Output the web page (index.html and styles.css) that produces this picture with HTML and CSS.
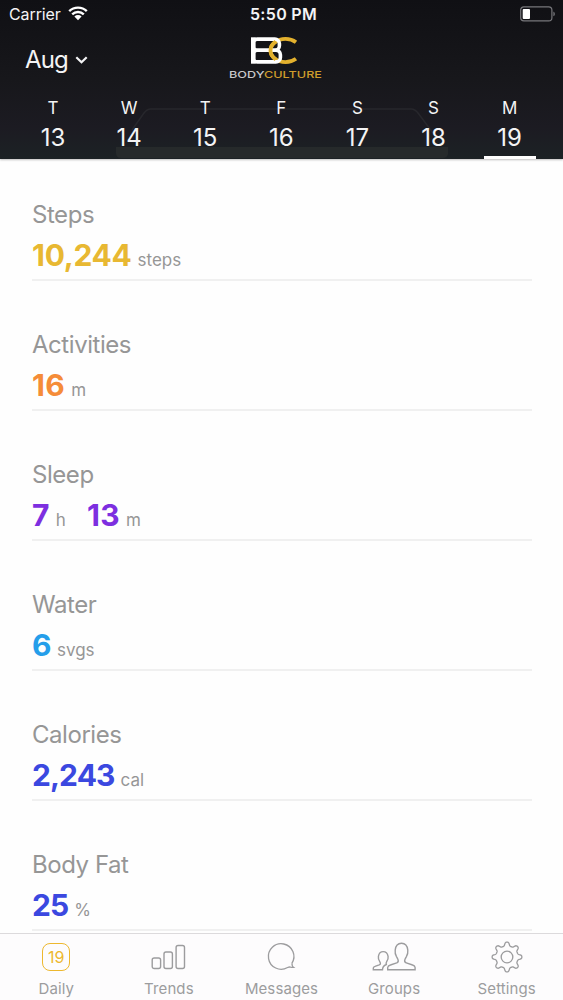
FILE: index.html
```
<!DOCTYPE html>
<html lang="en">

<head>
  <meta charset="UTF-8">
  <meta name="viewport" content="width=device-width, initial-scale=1.0">
  <title>Body Culture</title>

  <link rel="stylesheet" href="styles.css">
</head>

<body>
  <div class="screen">

    <!-- Header: status bar, month picker, logo and days -->
    <header class="header">
      <!-- Faint outline behind the days -->
      <svg class="header-art" width="563" height="159" viewBox="0 0 563 159">
        <path d="M116 147h332v7q-1 4-5 4H121q-5 0-5-5z" fill="#262a2b"/>
        <path d="M132 130l12-17q3-4 7-4h260q4 0 7 4l15 20" fill="none" stroke="#27272c" stroke-width="1.5"/>
      </svg>

      <div class="status-bar">
        <div class="status-left">
          <span class="carrier">Carrier</span>
          <svg class="wifi" width="20" height="15" viewBox="0 0 20 15">
            <path d="M1.2 5.2a12.6 12.6 0 0 1 17.6 0M4.2 8.3a8.4 8.4 0 0 1 11.6 0" fill="none" stroke="#fff" stroke-width="2.4"/>
            <path d="M6.4 10.5a5.2 5.2 0 0 1 7.2 0L10 14.2z" fill="#fff"/>
          </svg>
        </div>
        <span class="time">5:50 PM</span>
        <div class="status-right">
          <svg width="36" height="16" viewBox="0 0 36 16">
            <rect x=".7" y=".9" width="31.2" height="14" rx="3.2" fill="none" stroke="#77777b" stroke-width="1.2"/>
            <rect x="2.7" y="3" width="7.3" height="10" rx="1" fill="#fff"/>
            <path d="M33.4 5.5q1.5.8 1.5 2.4t-1.5 2.4z" fill="#77777b"/>
          </svg>
        </div>
      </div>

      <div class="title-row">
        <div class="month">
          <span>Aug</span>
          <svg width="13" height="11" viewBox="0 0 13 11">
            <path d="M1.3 3.2l5.200 5 5.200-5" fill="none" stroke="#f4f4f5" stroke-width="2.2"/>
          </svg>
        </div>
        <div class="logo">
          <svg width="50" height="27" viewBox="0 0 50 27">
            <!-- Gold ring, open on the right -->
            <ellipse cx="34.500" cy="13.500" rx="15" ry="11.600" pathLength="360" stroke-dasharray="276 84" stroke-dashoffset="-42" fill="none" stroke="#e3b12e" stroke-width="3.800"/>
            <!-- White boxes -->
            <rect x="1.900" y="2.100" width="26.500" height="11.200" rx="4.500" fill="none" stroke="#fff" stroke-width="3.600"/>
            <rect x="1.900" y="13.300" width="27.500" height="11.600" rx="4.500" fill="none" stroke="#fff" stroke-width="3.600"/>
            <rect x="0" y=".3" width="4.600" height="26.400" fill="#fff"/>
            <!-- Left side of the ring passes over the boxes -->
            <ellipse cx="34.500" cy="13.500" rx="15" ry="11.600" pathLength="360" stroke-dasharray="92 268" stroke-dashoffset="-134" fill="none" stroke="#e3b12e" stroke-width="3.800"/>
          </svg>
          <svg width="94" height="10" viewBox="0 0 94 10">
            <text class="logo-name" x="0" y="8.300" textLength="93" lengthAdjust="spacingAndGlyphs">BODY<tspan class="gold">CULTURE</tspan></text>
          </svg>
        </div>
      </div>

      <div class="days">
        <div class="day"><span class="weekday">T</span><span class="date">13</span></div>
        <div class="day"><span class="weekday">W</span><span class="date">14</span></div>
        <div class="day"><span class="weekday">T</span><span class="date">15</span></div>
        <div class="day"><span class="weekday">F</span><span class="date">16</span></div>
        <div class="day"><span class="weekday">S</span><span class="date">17</span></div>
        <div class="day"><span class="weekday">S</span><span class="date">18</span></div>
        <div class="day selected"><span class="weekday">M</span><span class="date">19</span></div>
      </div>
    </header>

    <!-- Daily values -->
    <main class="metrics">
      <section class="metric steps">
        <h2>Steps</h2>
        <p><b>10,244</b><span>steps</span></p>
      </section>
      <section class="metric activities">
        <h2>Activities</h2>
        <p><b>16</b><span>m</span></p>
      </section>
      <section class="metric sleep">
        <h2>Sleep</h2>
        <p><b>7</b><span class="hours">h</span><b>13</b><span>m</span></p>
      </section>
      <section class="metric water">
        <h2>Water</h2>
        <p><b>6</b><span>svgs</span></p>
      </section>
      <section class="metric calories">
        <h2>Calories</h2>
        <p><b>2,243</b><span>cal</span></p>
      </section>
      <section class="metric fat">
        <h2>Body Fat</h2>
        <p><b>25</b><span>%</span></p>
      </section>
    </main>

    <!-- Bottom tab bar -->
    <nav class="tabs">
      <a class="tab">
        <span class="icon"><span class="calendar">19</span></span>
        <span>Daily</span>
      </a>
      <a class="tab">
        <svg class="icon" width="36" height="32" viewBox="0 0 36 32">
          <rect x="1.200" y="17" width="8.400" height="10.500" rx="2"/>
          <rect x="13" y="11" width="8.400" height="16.500" rx="2"/>
          <rect x="25.100" y="4.500" width="8.400" height="23" rx="2"/>
        </svg>
        <span>Trends</span>
      </a>
      <a class="tab">
        <svg class="icon" width="30" height="32" viewBox="0 0 32 32">
          <path d="M27.600 22.800A13.600 13.600 0 1 0 23 27.200q2-.8 3.200-.4 1.300.4 3.100.3-1.500-1-1.700-4.300"/>
        </svg>
        <span>Messages</span>
      </a>
      <a class="tab">
        <svg class="icon" width="44" height="32" viewBox="0 0 44 32">
          <path d="M15.700 28.700v-2.200q.2-1.800 2.700-2.500l6.300-2.200q2.100-.8 1.400-2.900-.5-1.500-1.600-3.300-1.800-3.100-1.300-6.500.7-6.900 6.300-6.900t6.300 6.900q.4 3.400-1.400 6.500-1.100 1.800-1.600 3.300-.7 2.100 1.500 2.900l6.300 2.200q2.400.7 2.500 2.500v2.200z"/>
          <path d="M10.500 28.700H1.300v-1.600q0-1.300 1.700-1.800l4.200-1.400q1.800-.7.900-2.600-2.300-3.300-1.700-6 .8-4.700 4.800-4.700t4.900 4.700q.4 2.400-1.300 5-1.100 1.700-.5 3.200-3.700 1.600-3.800 5.200z"/>
        </svg>
        <span>Groups</span>
      </a>
      <a class="tab">
        <svg class="icon" width="34" height="34" viewBox="0 0 34 34">
          <circle cx="17" cy="17" r="6.200"/>
          <path id="gear" d=""/>
        </svg>
        <span>Settings</span>
      </a>
    </nav>
  </div>

  <script src="gear.js"></script>
</body>

</html>
```
FILE: styles.css
```
body {
  margin: 0;
  padding: 0;
  font-family: Inter, "Liberation Sans", sans-serif;
}

.screen {
  display: flex;
  flex-direction: column;
  height: 1000px;
  overflow: hidden;
  background-color: #fefefe;
}

/* Header */
.header {
  position: relative;
  height: 159px;
  flex: none;
  background: linear-gradient(#101014, #17171b 50%, #1c1b22 80%, #1c2225);
  color: #f4f4f5;
  box-shadow: 0 1px 2px rgba(0, 0, 0, 0.25);
}

/* Decoration that lies under the days */
.header-art {
  position: absolute;
  left: 0;
  top: 0;
}

.status-bar,
.title-row,
.days {
  position: relative;
  display: grid;
}

.status-bar {
  grid-template-columns: 1fr auto 1fr;
  align-items: center;
  height: 28px;
  padding: 0 7px 0 9px;
  font-size: 16px;
}

.status-left {
  display: flex;
  align-items: center;
  gap: 7px;
}

.carrier {
  letter-spacing: -0.1px;
}

.wifi {
  margin-top: -2px;
}

.time {
  margin-left: 2px;
  font-weight: 600;
  letter-spacing: 0.3px;
}

.status-right {
  display: flex;
  justify-content: flex-end;
}

.title-row {
  grid-template-columns: 229px 94px;
  height: 64px;
}

.month {
  display: flex;
  align-items: center;
  gap: 7px;
  height: 63px;
  padding-left: 25px;
  font-size: 24px;
  letter-spacing: -0.9px;
}

.logo {
  display: flex;
  flex-direction: column;
  align-items: center;
  gap: 6px;
  padding-top: 9px;
}

.logo-name {
  font-family: Inter, sans-serif;
  font-size: 9.5px;
  font-weight: 500;
  fill: #c9c9cb;
}

.gold {
  fill: #cf9c2b;
}

.days {
  grid-template-columns: repeat(7, 76.1px);
  height: 67px;
  padding-left: 15px;
}

.day {
  display: flex;
  flex-direction: column;
  align-items: center;
}

.weekday {
  margin-top: 6px;
  font-size: 17px;
  line-height: 20px;
}

.date {
  height: 38px;
  font-size: 24px;
  line-height: 40px;
}

.selected::after {
  content: "";
  width: 52px;
  height: 3px;
  background-color: #fff;
}

/* Daily values */
.metrics {
  display: flex;
  flex-direction: column;
  flex: 1;
  gap: 50px;
  padding: 42px 31px 0 32px;
}

.metric {
  box-sizing: border-box;
  height: 80px;
  flex: none;
  border-bottom: 2px solid #f0f0f0;
}

.metric h2 {
  margin: 0;
  color: #969696;
  font-size: 24px;
  font-weight: 400;
  line-height: 28px;
  letter-spacing: -0.45px;
}

.metric p {
  display: flex;
  align-items: baseline;
  margin: 6px 0 0;
  color: #969696;
  font-size: 17px;
  line-height: 40px;
}

.metric b {
  margin-right: 6px;
  font-size: 30px;
  font-weight: 700;
}

.metric .hours {
  margin-right: 21px;
}

.steps b {
  color: #e8b832;
  letter-spacing: -0.3px;
}

.activities b {
  color: #f58c38;
  letter-spacing: 0.4px;
}

.sleep b {
  color: #7d2fe0;
  letter-spacing: 0.4px;
}

.water b {
  color: #259eea;
  letter-spacing: -0.5px;
}

.calories b,
.fat b {
  color: #3b48e0;
  letter-spacing: -0.9px;
}

/* Bottom tab bar */
.tabs {
  display: grid;
  grid-template-columns: repeat(5, 1fr);
  height: 66px;
  flex: none;
  border-top: 1px solid #dcdadc;
  background-color: #fdfcfd;
}

.tab {
  display: flex;
  flex-direction: column;
  align-items: center;
  color: #9c9c9e;
  font-size: 15px;
  line-height: 20px;
  letter-spacing: 0.1px;
}

.icon {
  display: flex;
  align-items: center;
  justify-content: center;
  height: 32px;
  margin: 7px 0 6px;
  overflow: visible;
  fill: none;
  stroke: #9c9c9e;
  stroke-width: 1.4;
}

.calendar {
  box-sizing: border-box;
  width: 28px;
  height: 28px;
  border: 1.5px solid #edb82f;
  border-radius: 8px;
  color: #edb82f;
  font-size: 16px;
  line-height: 26px;
  letter-spacing: 0;
  text-align: center;
}
```
FILE: gear.js
```
// Builds the outline of the settings gear with eight rounded teeth
var d = "";
for (var i = 0; i <= 160; i++) {
  var a = i / 160 * Math.PI * 2;
  var wave = Math.cos(a * 8);
  var r = 13.9 + 2.1 * Math.tanh((wave - 0.2) * 1.8);
  d += (i ? "L" : "M") + (17 + r * Math.sin(a)).toFixed(2) + " " + (17 - r * Math.cos(a)).toFixed(2);
}
document.getElementById("gear").setAttribute("d", d + "Z");
```
